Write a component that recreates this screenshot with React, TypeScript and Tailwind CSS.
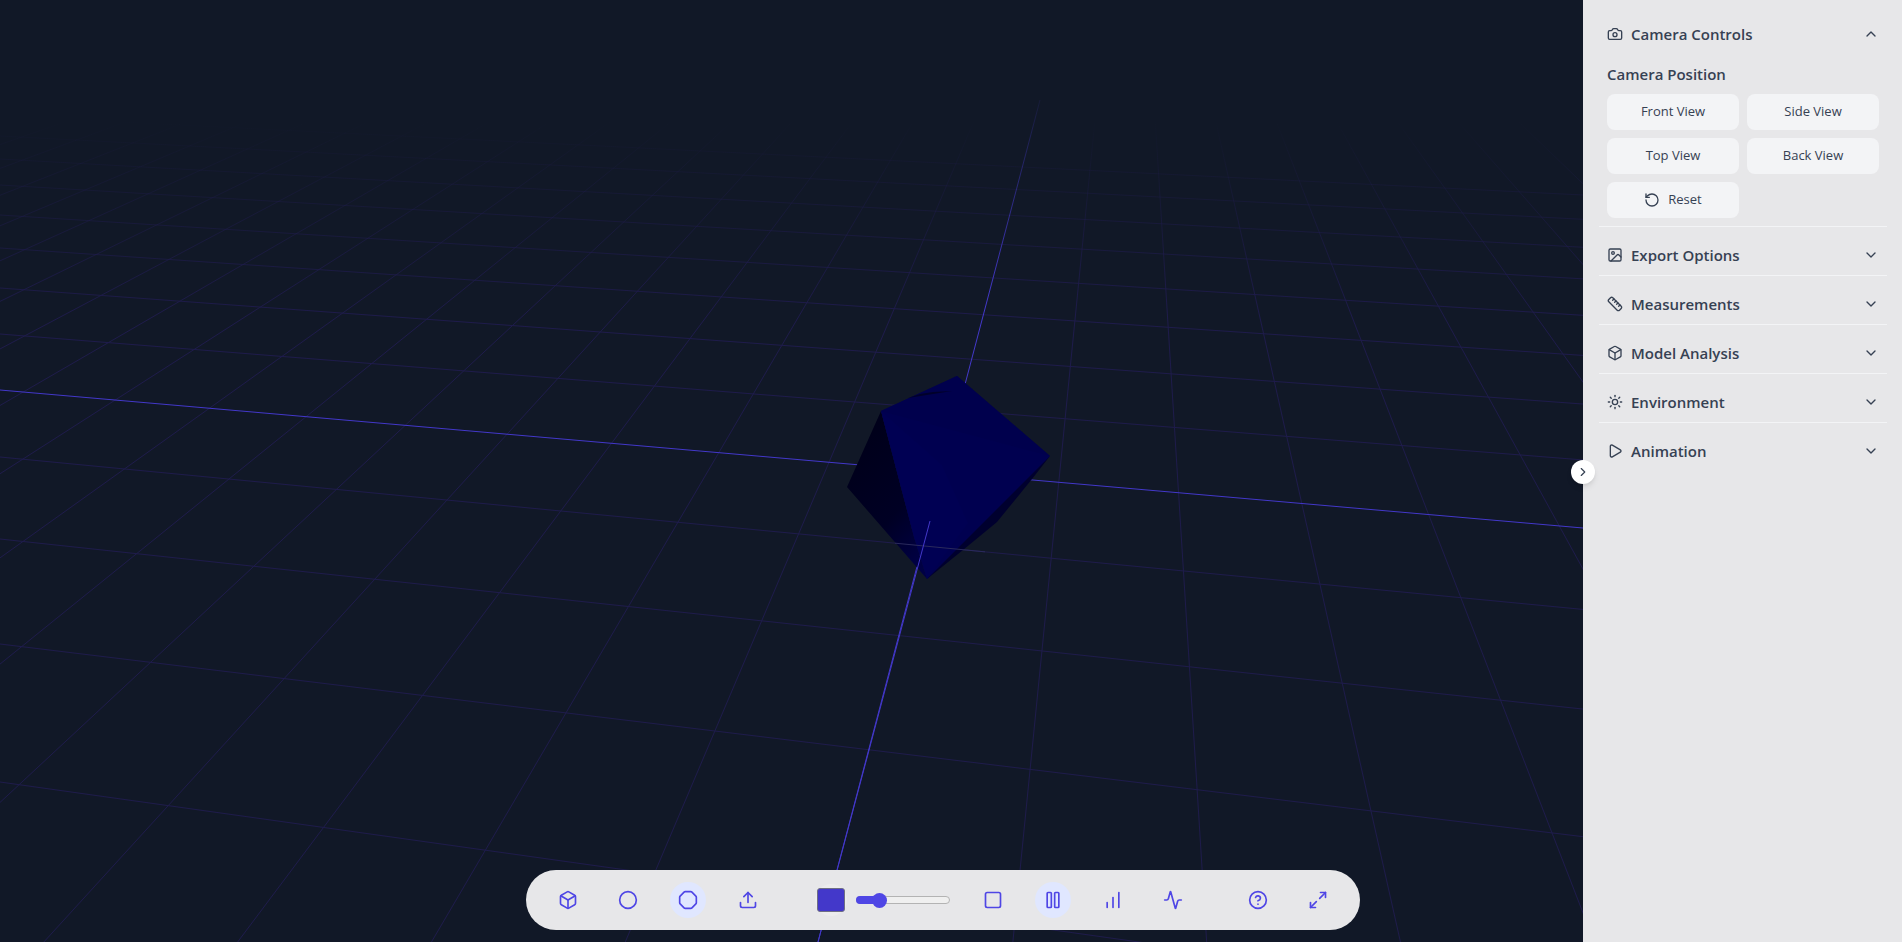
import {
  Activity,
  Box,
  Camera,
  ChartNoAxesColumnIncreasing,
  ChevronDown,
  ChevronRight,
  ChevronUp,
  Circle,
  CircleHelp,
  Image,
  Maximize2,
  Octagon,
  Pause,
  Play,
  RotateCcw,
  Ruler,
  Square,
  Sun,
  Upload,
} from "lucide-react";

const VP_X = 1132;
const VP_Y = -251;
const DEPTH_LINES = Array.from({ length: 27 }, (_, i) => i - 10).filter((n) => n !== 0);
const ACROSS_LINES = [782, 644, 539, 457, 334, 288, 248, 215, 185, 159, 136, 116];

function depthX(n: number, y: number) {
  return VP_X + (935 - 122 * n - VP_X) * ((y - VP_Y) / (500 - VP_Y));
}

function acrossY(y0: number, x: number) {
  return y0 + (y0 - VP_Y) * 0.000136 * x;
}

function Scene() {
  return (
    <svg className="absolute inset-0 h-full w-full" viewBox="0 0 1583 942" preserveAspectRatio="none">
      <defs>
        <linearGradient id="gridFog" gradientUnits="userSpaceOnUse" x1="0" y1="120" x2="0" y2="320">
          <stop offset="0" stopColor="#1e1b4b" stopOpacity="0" />
          <stop offset="1" stopColor="#1e1b4b" stopOpacity="1" />
        </linearGradient>
        <linearGradient id="axisFog" gradientUnits="userSpaceOnUse" x1="0" y1="100" x2="0" y2="300">
          <stop offset="0" stopColor="#4338ca" stopOpacity="0.1" />
          <stop offset="1" stopColor="#4338ca" stopOpacity="1" />
        </linearGradient>
        <linearGradient id="leftFace" x1="0.2" y1="0" x2="0.7" y2="1">
          <stop offset="0" stopColor="#000018" />
          <stop offset="0.65" stopColor="#000024" />
          <stop offset="1" stopColor="#000044" />
        </linearGradient>
      </defs>

      {DEPTH_LINES.map((n) => (
        <line key={n} x1={depthX(n, 110)} y1={110} x2={depthX(n, 1000)} y2={1000} stroke="url(#gridFog)" strokeWidth="1" />
      ))}
      {ACROSS_LINES.map((y0) => (
        <line key={y0} x1={0} y1={y0} x2={1583} y2={acrossY(y0, 1583)} stroke="url(#gridFog)" strokeWidth="1" />
      ))}

      {/* axes */}
      <line x1={0} y1={390} x2={1583} y2={528} stroke="#4338ca" strokeWidth="1" />
      <line x1={1040} y1={100} x2={818} y2={942} stroke="url(#axisFog)" strokeWidth="1" />

      {/* shape */}
      <polygon points="1050,456 1032,479 997,522 963,550 927,579 960,520" fill="#00002e" />
      <polygon points="881,411 914,537 927,579 847,487" fill="url(#leftFace)" />
      <polygon points="881,411 957,376 1050,456 927,579 914,537" fill="#000050" />
      <polygon points="881,411 957,376 1050,456" fill="#00004d" />
      <polygon points="881,411 942,465 968,523 927,579 914,537" fill="#000053" />
      <polygon points="908,398 952,391 933,392 920,394" fill="#00002a" />

      {/* part of the scene that sits in front of the shape */}
      <line x1={895} y1={acrossY(457, 895)} x2={985} y2={acrossY(457, 985)} stroke="#2a2a5c" strokeWidth="1" />
      <line x1={930} y1={521} x2={818} y2={942} stroke="#4338ca" strokeWidth="1" />
    </svg>
  );
}

function ToolButton({ icon: Icon, active }: { icon: typeof Box; active?: boolean }) {
  return (
    <button className={`rounded-full p-2 text-[#4f46e5] ${active ? "bg-indigo-100" : ""}`}>
      <Icon size={20} />
    </button>
  );
}

function Toolbar() {
  return (
    <div className="absolute bottom-3 left-[526px] flex h-[60px] w-[834px] items-center rounded-full bg-[#e7e7e9] px-6">
      <div className="flex items-center gap-6">
        <ToolButton icon={Box} />
        <ToolButton icon={Circle} />
        <ToolButton icon={Octagon} active />
        <ToolButton icon={Upload} />
      </div>
      <div className="ml-[49px] flex items-center gap-[9px]">
        <button className="flex h-8 w-8 items-center justify-center rounded-full bg-[#ececed]">
          <span className="h-6 w-7 rounded-[3px] border border-[#6f6f85] bg-[#4338ca]" />
        </button>
        {/* slider */}
        <div className="relative h-2 w-[94px] rounded-full border border-[#b3b3b3] bg-[#efefef]">
          <div className="absolute -top-px -left-px h-2 w-[22px] rounded-l-full bg-[#4f46e5]" />
          <div className="absolute top-[-4.5px] left-[14.5px] h-[15px] w-[15px] rounded-full bg-[#4f46e5]" />
        </div>
      </div>
      <div className="ml-[25px] flex items-center gap-6">
        <ToolButton icon={Square} />
        <ToolButton icon={Pause} active />
        <ToolButton icon={ChartNoAxesColumnIncreasing} />
        <ToolButton icon={Activity} />
      </div>
      <div className="ml-auto flex items-center gap-6">
        <ToolButton icon={CircleHelp} />
        <ToolButton icon={Maximize2} />
      </div>
    </div>
  );
}

function SectionHeader({ icon: Icon, title, open }: { icon: typeof Box; title: string; open?: boolean }) {
  return (
    <button className="flex h-6 w-full items-center justify-between px-2 text-gray-700">
      <span className="flex items-center gap-2 text-[15px] font-semibold">
        <Icon size={16} />
        {title}
      </span>
      {open ? <ChevronUp size={16} /> : <ChevronDown size={16} />}
    </button>
  );
}

const VIEW_BUTTON = "flex h-9 items-center justify-center gap-2 rounded-lg bg-gray-100 text-[13px] text-gray-700";

function Sidebar() {
  return (
    <aside className="w-[319px] shrink-0 bg-[#e7e7e9] pt-[6px] pr-[15px] pl-4 font-['Open_Sans','Noto_Sans',sans-serif]">
      <div className="border-b border-gray-100 pt-4 pb-2">
        <SectionHeader icon={Camera} title="Camera Controls" open />
        <div className="px-2 pt-[18px]">
          <h3 className="text-[15px] leading-5 font-semibold text-gray-700">Camera Position</h3>
          <div className="mt-[10px] grid grid-cols-2 gap-2">
            <button className={VIEW_BUTTON}>Front View</button>
            <button className={VIEW_BUTTON}>Side View</button>
            <button className={VIEW_BUTTON}>Top View</button>
            <button className={VIEW_BUTTON}>Back View</button>
            <button className={VIEW_BUTTON}>
              <RotateCcw size={16} />
              Reset
            </button>
          </div>
        </div>
      </div>
      {[
        { icon: Image, title: "Export Options" },
        { icon: Ruler, title: "Measurements" },
        { icon: Box, title: "Model Analysis" },
        { icon: Sun, title: "Environment" },
      ].map((s) => (
        <div key={s.title} className="border-b border-gray-100 pt-4 pb-2">
          <SectionHeader icon={s.icon} title={s.title} />
        </div>
      ))}
      <div className="pt-4 pb-2">
        <SectionHeader icon={Play} title="Animation" />
      </div>
    </aside>
  );
}

export default function App() {
  return (
    <main className="flex h-screen w-full overflow-hidden bg-[#111827]">
      <div className="relative flex-1">
        <Scene />
        <Toolbar />
        <button className="absolute top-[460px] -right-3 z-10 flex h-6 w-6 items-center justify-center rounded-full bg-white text-gray-700 shadow-md">
          <ChevronRight size={14} />
        </button>
      </div>
      <Sidebar />
    </main>
  );
}
